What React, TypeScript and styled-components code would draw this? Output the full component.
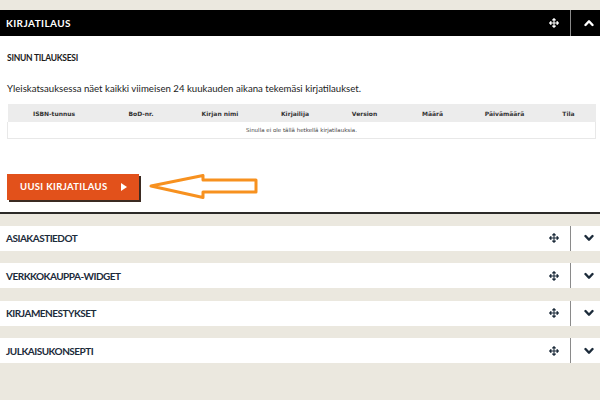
import React from "react";
import styled, { createGlobalStyle } from "styled-components";
import { FaArrowsAlt } from "react-icons/fa";

const Global = createGlobalStyle`
  *, *::before, *::after { box-sizing: border-box; }
  html, body { margin: 0; padding: 0; }
  body {
    background: #ebe8df;
    font-family: Lato, "Open Sans", sans-serif;
    width: 600px;
    height: 400px;
    overflow: hidden;
  }
`;

const Page = styled.div`
  padding-top: 10px;
  width: 600px;
`;

const OpenPanel = styled.section`
  background: #fff;
  border-bottom: 2px solid #2b2a28;
`;

const Bar = styled.div<{ $dark?: boolean }>`
  display: flex;
  align-items: stretch;
  height: ${(p) => (p.$dark ? 26 : 25)}px;
  background: ${(p) => (p.$dark ? "#000" : "#fff")};
  color: ${(p) => (p.$dark ? "#fff" : "#1c2b3a")};
`;

const BarTitle = styled.div<{ $dark?: boolean }>`
  flex: 1;
  display: flex;
  align-items: center;
  padding-left: 6px;
  font-weight: 700;
  font-size: 10px;
  letter-spacing: ${(p) => (p.$dark ? "0.4px" : "-0.5px")};
  text-transform: uppercase;
`;

const MoveBox = styled.div`
  width: 34px;
  display: flex;
  align-items: center;
  justify-content: center;
  font-size: 10px;
  border-right: 1px solid #8a8a8a;
`;

const ToggleBox = styled.div`
  width: 29px;
  display: flex;
  align-items: center;
  justify-content: center;
  padding-left: 6px;
`;

const Content = styled.div`
  padding: 16px 5px 11px 7px;
  color: #1a1a1a;
`;

const SubTitle = styled.h2`
  margin: 0;
  font-size: 8.5px;
  line-height: 12px;
  font-weight: 700;
  letter-spacing: -0.25px;
`;

const Intro = styled.p`
  margin: 18px 0 0;
  font-size: 9.65px;
  line-height: 12px;
  color: #222;
`;

const Table = styled.table`
  margin-top: 10px;
  width: 588px;
  border-collapse: collapse;
  table-layout: fixed;
  font-family: "DejaVu Sans", sans-serif;
`;

const Th = styled.th<{ $w: number }>`
  width: ${(p) => p.$w}px;
  height: 18px;
  padding: 0;
  background: #ececec;
  font-size: 6px;
  font-weight: 700;
  color: #333;
  text-align: center;
`;

const Td = styled.td`
  height: 16px;
  padding: 0;
  border: 1px solid #e8e8e8;
  border-top: none;
  font-size: 5.5px;
  color: #444;
  text-align: center;
`;

const ActionRow = styled.div`
  margin-top: 34px;
  display: flex;
  align-items: center;
  gap: 9px;
`;

const OrderButton = styled.button`
  width: 132px;
  height: 26px;
  border: none;
  background: #e2511b;
  color: #fff;
  font-family: Lato, sans-serif;
  font-weight: 700;
  font-size: 9.5px;
  letter-spacing: 0.35px;
  display: flex;
  align-items: center;
  padding: 0 0 0 13px;
  gap: 13px;
  box-shadow: 2px 2px 0 #3b2b22;
  cursor: pointer;
`;

const Triangle = styled.span`
  width: 0;
  height: 0;
  border-top: 4px solid transparent;
  border-bottom: 4px solid transparent;
  border-left: 6px solid #fff;
`;

const RowList = styled.div`
  padding-top: 12px;
  display: flex;
  flex-direction: column;
  gap: 12.5px;
`;

const cols: [string, number][] = [
  ["ISBN-tunnus", 93],
  ["BoD-nr.", 81],
  ["Kirjan nimi", 77],
  ["Kirjailija", 73],
  ["Version", 66],
  ["Määrä", 70],
  ["Päivämäärä", 74],
  ["Tila", 54],
];

const sections = ["Asiakastiedot", "Verkkokauppa-widget", "Kirjamenestykset", "Julkaisukonsepti"];

function Chevron({ up }: { up?: boolean }) {
  return (
    <svg width="10" height="8" viewBox="0 0 10 8">
      <path
        d={up ? "M1.5 6 L5 2.3 L8.5 6" : "M1.5 2 L5 5.7 L8.5 2"}
        fill="none"
        stroke="currentColor"
        strokeWidth="2.4"
        strokeLinecap="round"
        strokeLinejoin="round"
      />
    </svg>
  );
}

export default function App() {
  return (
    <>
      <Global />
      <Page>
        <OpenPanel>
          <Bar $dark>
            <BarTitle $dark>Kirjatilaus</BarTitle>
            <MoveBox>
              <FaArrowsAlt />
            </MoveBox>
            <ToggleBox>
              <Chevron up />
            </ToggleBox>
          </Bar>
          <Content>
            <SubTitle>SINUN TILAUKSESI</SubTitle>
            <Intro>
              Yleiskatsauksessa näet kaikki viimeisen 24 kuukauden aikana tekemäsi kirjatilaukset.
            </Intro>
            <Table>
              <thead>
                <tr>
                  {cols.map(([c, w]) => (
                    <Th key={c} $w={w}>
                      {c}
                    </Th>
                  ))}
                </tr>
              </thead>
              <tbody>
                <tr>
                  <Td colSpan={8}>Sinulla ei ole tällä hetkellä kirjatilauksia.</Td>
                </tr>
              </tbody>
            </Table>
            <ActionRow>
              <OrderButton>
                UUSI KIRJATILAUS <Triangle />
              </OrderButton>
              <svg width="112" height="28" viewBox="0 0 112 28">
                <path
                  d="M3 13 L55 2.5 L55 7 L108 7 L108 19 L55 19 L55 24.5 Z"
                  fill="none"
                  stroke="#f7911f"
                  strokeWidth="3"
                  strokeLinejoin="round"
                />
              </svg>
            </ActionRow>
          </Content>
        </OpenPanel>
        <RowList>
          {sections.map((s) => (
            <Bar key={s}>
              <BarTitle>{s}</BarTitle>
              <MoveBox>
                <FaArrowsAlt />
              </MoveBox>
              <ToggleBox>
                <Chevron />
              </ToggleBox>
            </Bar>
          ))}
        </RowList>
      </Page>
    </>
  );
}
